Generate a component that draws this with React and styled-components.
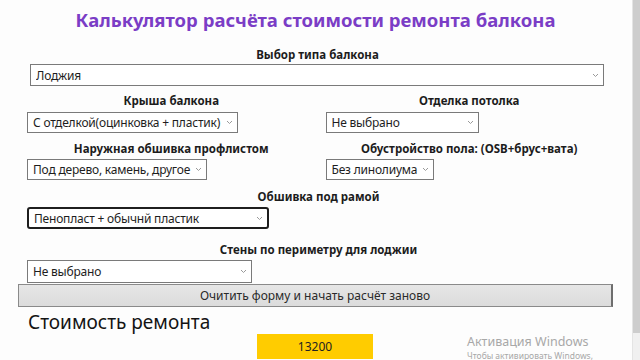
import React from 'react';
import styled, { createGlobalStyle } from 'styled-components';

const GlobalStyle = createGlobalStyle`
  html, body {
    margin: 0;
    padding: 0;
    width: 640px;
    height: 360px;
    overflow: hidden;
    background: #fdfdfd;
    font-family: 'Noto Sans', 'Open Sans', Arial, sans-serif;
    color: #1e1e1e;
  }
`;

const Screen = styled.div`
  display: flex;
  width: 640px;
  height: 360px;
  position: relative;
`;

const Page = styled.main`
  flex: 1;
  padding: 0 19px 0 18px;
`;

const Scrollbar = styled.div`
  width: 8px;
  height: 360px;
  background: #f0f0f0;
  border-left: 1px solid #e4e4e4;
  display: flex;
  flex-direction: column;
`;

const Thumb = styled.div`
  height: 333px;
  background: #cdcdcd;
`;

const Title = styled.h1`
  margin: 0;
  height: 40px;
  line-height: 40px;
  text-align: center;
  font-size: 18.5px;
  font-weight: 700;
  color: #7b3dc6;
`;

const Label = styled.div`
  text-align: center;
  font-size: 11.5px;
  font-weight: 700;
  line-height: 16px;
  color: #1c1c1c;
  margin: ${(p) => p.$m || '0'};
`;

const Row = styled.div`
  display: grid;
  grid-template-columns: 1fr 1fr;
`;

const Field = styled.div`
  display: flex;
  flex-direction: column;
  padding-left: ${(p) => p.$indent || 9}px;
`;

const SelectBox = styled.div`
  box-sizing: border-box;
  display: flex;
  align-items: center;
  gap: 3px;
  width: ${(p) => p.$w}px;
  height: ${(p) => p.$h || 22}px;
  margin-top: ${(p) => p.$top || 0}px;
  padding: 0 4px 0 5px;
  background: #fff;
  border: ${(p) => (p.$focused ? '2px solid #1e1e1e' : '1px solid #7a7a7a')};
  border-radius: ${(p) => (p.$focused ? '3px' : '0')};
  font-size: 12px;
  letter-spacing: -0.2px;
  color: #1e1e1e;
  white-space: nowrap;
`;

const SelectText = styled.span`
  flex: 1;
  overflow: hidden;
`;

const ChevronIcon = styled.svg`
  flex-shrink: 0;
`;

const Chevron = () => (
  <ChevronIcon width="7" height="5" viewBox="0 0 7 5" fill="none">
    <path d="M1 1l2.5 2.5L6 1" stroke="#9a9a9a" strokeWidth="1" />
  </ChevronIcon>
);

const Select = ({ value, w, focused, top, h }) => (
  <SelectBox $w={w} $focused={focused} $top={top} $h={h}>
    <SelectText>{value}</SelectText>
    <Chevron />
  </SelectBox>
);

const ResetButton = styled.button`
  display: block;
  box-sizing: border-box;
  width: 595px;
  height: 23px;
  margin: 1px 0 0 0;
  padding: 0;
  background: linear-gradient(#e6e6e6, #dcdcdc);
  border: 1px solid #8a8a8a;
  border-right: 2px solid #6e6e6e;
  font-family: 'Noto Sans', 'Open Sans', Arial, sans-serif;
  font-size: 12px;
  color: #2a2a2a;
`;

const CostTitle = styled.h2`
  margin: 3px 0 0 10px;
  font-size: 19px;
  font-weight: 400;
  line-height: 24px;
  color: #141414;
`;

const Result = styled.div`
  width: 116px;
  height: 25px;
  margin-left: 239px;
  background: #ffcc00;
  display: flex;
  align-items: center;
  justify-content: center;
  font-size: 12px;
  color: #222;
`;

const Watermark = styled.div`
  position: absolute;
  left: 467px;
  top: 334px;
  color: #a8a8a8;
  pointer-events: none;
`;

const WatermarkTitle = styled.div`
  font-size: 12.5px;
  line-height: 16px;
`;

const WatermarkNote = styled.div`
  font-size: 8.5px;
  line-height: 11px;
`;

export default function App() {
  return (
    <>
      <GlobalStyle />
      <Screen>
        <Page>
          <Title>Калькулятор расчёта стоимости ремонта балкона</Title>

          <Label $m="7px 0 0 4px">Выбор типа балкона</Label>
          <Field $indent={12}>
            <Select value="Лоджия" w={574} top={1} />
          </Field>

          <Row>
            <Field>
              <Label $m="7px 0 0 0">Крыша балкона</Label>
              <Select value="С отделкой(оцинковка + пластик)" w={211} top={3} h={21} />
            </Field>
            <Field $indent={10}>
              <Label $m="7px 0 0 0">Отделка потолка</Label>
              <Select value="Не выбрано" w={153} top={3} h={21} />
            </Field>
          </Row>

          <Row>
            <Field>
              <Label $m="8px 0 0 0">Наружная обшивка профлистом</Label>
              <Select value="Под дерево, камень, другое" w={180} top={2} h={21} />
            </Field>
            <Field $indent={10}>
              <Label $m="8px 0 0 0">Обустройство пола: (OSB+брус+вата)</Label>
              <Select value="Без линолиума" w={108} top={2} h={21} />
            </Field>
          </Row>

          <Label $m="9px 0 0 6px">Обшивка под рамой</Label>
          <Field>
            <Select value="Пенопласт + обычнй пластик" w={242} top={2} focused />
          </Field>

          <Label $m="13px 0 0 6px">Стены по периметру для лоджии</Label>
          <Field>
            <Select value="Не выбрано" w={225} top={2} h={23} />
          </Field>

          <ResetButton>Очитить форму и начать расчёт заново</ResetButton>

          <CostTitle>Стоимость ремонта</CostTitle>
          <Result>13200</Result>
        </Page>
        <Scrollbar>
          <Thumb />
        </Scrollbar>
        <Watermark>
          <WatermarkTitle>Активация Windows</WatermarkTitle>
          <WatermarkNote>Чтобы активировать Windows,</WatermarkNote>
        </Watermark>
      </Screen>
    </>
  );
}
